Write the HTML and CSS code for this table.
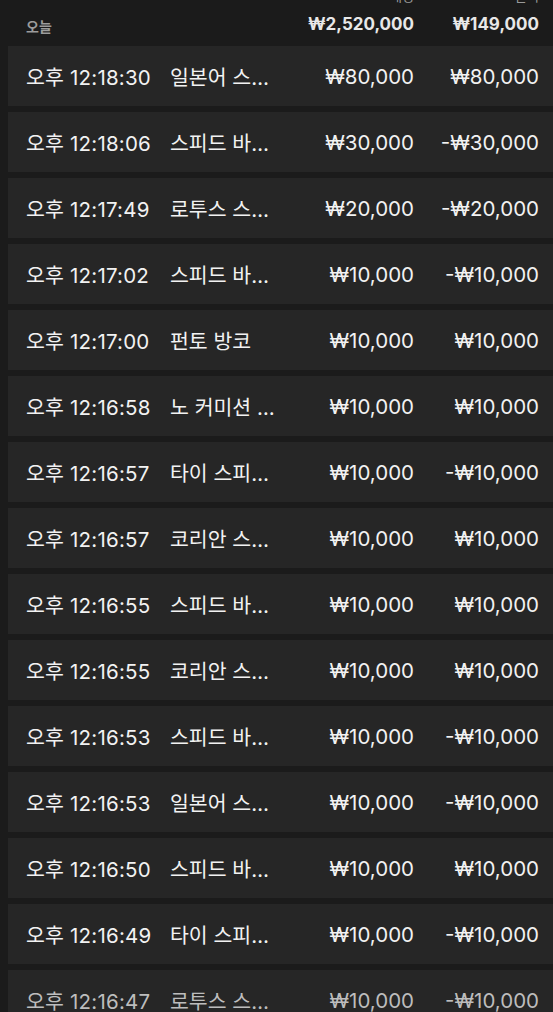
FILE: index.html
```html
<!DOCTYPE html>
<html lang="ko">
<head>
<meta charset="utf-8">
<link rel="stylesheet" href="styles.css">
</head>
<body>
<div class="page">
  <div class="summary">
    <span class="label c3">배팅</span>
    <span class="label c4">손익</span>
    <span class="today">오늘</span>
    <span class="total c3">₩2,520,000</span>
    <span class="total c4">₩149,000</span>
  </div>
  <div class="list">
    <div class="row"><span class="time">오후 12:18:30</span><span class="name">일본어 스…</span><span class="amt">₩80,000</span><span class="net">₩80,000</span></div>
    <div class="row"><span class="time">오후 12:18:06</span><span class="name">스피드 바…</span><span class="amt">₩30,000</span><span class="net">-₩30,000</span></div>
    <div class="row"><span class="time">오후 12:17:49</span><span class="name">로투스 스…</span><span class="amt">₩20,000</span><span class="net">-₩20,000</span></div>
    <div class="row"><span class="time">오후 12:17:02</span><span class="name">스피드 바…</span><span class="amt">₩10,000</span><span class="net">-₩10,000</span></div>
    <div class="row"><span class="time">오후 12:17:00</span><span class="name">펀토 방코</span><span class="amt">₩10,000</span><span class="net">₩10,000</span></div>
    <div class="row"><span class="time">오후 12:16:58</span><span class="name">노 커미션 …</span><span class="amt">₩10,000</span><span class="net">₩10,000</span></div>
    <div class="row"><span class="time">오후 12:16:57</span><span class="name">타이 스피…</span><span class="amt">₩10,000</span><span class="net">-₩10,000</span></div>
    <div class="row"><span class="time">오후 12:16:57</span><span class="name">코리안 스…</span><span class="amt">₩10,000</span><span class="net">₩10,000</span></div>
    <div class="row"><span class="time">오후 12:16:55</span><span class="name">스피드 바…</span><span class="amt">₩10,000</span><span class="net">₩10,000</span></div>
    <div class="row"><span class="time">오후 12:16:55</span><span class="name">코리안 스…</span><span class="amt">₩10,000</span><span class="net">₩10,000</span></div>
    <div class="row"><span class="time">오후 12:16:53</span><span class="name">스피드 바…</span><span class="amt">₩10,000</span><span class="net">-₩10,000</span></div>
    <div class="row"><span class="time">오후 12:16:53</span><span class="name">일본어 스…</span><span class="amt">₩10,000</span><span class="net">-₩10,000</span></div>
    <div class="row"><span class="time">오후 12:16:50</span><span class="name">스피드 바…</span><span class="amt">₩10,000</span><span class="net">₩10,000</span></div>
    <div class="row"><span class="time">오후 12:16:49</span><span class="name">타이 스피…</span><span class="amt">₩10,000</span><span class="net">-₩10,000</span></div>
    <div class="row dim"><span class="time">오후 12:16:47</span><span class="name">로투스 스…</span><span class="amt">₩10,000</span><span class="net">-₩10,000</span></div>
  </div>
</div>
</body>
</html>
```

FILE: styles.css
```css
html, body {
  margin: 0;
  padding: 0;
  background: #1b1b1b;
  overflow: hidden;
}
.page {
  font-family: Inter, "Noto Sans CJK KR", sans-serif;
  color: #f2f2f2;
  padding-left: 8px;
  height: 1012px;
  overflow: hidden;
}
.summary {
  display: grid;
  grid-template-columns: 144px 1fr 110px 125px;
  grid-template-rows: 16px 22px;
  margin-top: -12px;
  padding: 0 14px 0 18px;
  margin-bottom: 11px;
  row-gap: 9px;
}
.label {
  grid-row: 1;
  font-size: 13px;
  line-height: 16px;
  color: #9a9a9a;
  text-align: right;
}
.c3 { grid-column: 3; }
.c4 { grid-column: 4; }
.today {
  grid-row: 2;
  grid-column: 1;
  font-size: 14px;
  font-weight: 700;
  color: #9c9c9c;
  align-self: end;
  line-height: 18px;
  margin-bottom: -1px;
}
.total {
  grid-row: 2;
  font-size: 17px;
  font-weight: 700;
  line-height: 22px;
  text-align: right;
  color: #e8e8e8;
}
.list {
  display: flex;
  flex-direction: column;
  gap: 6px;
}
.row {
  display: grid;
  grid-template-columns: 144px 1fr 110px 125px;
  align-items: center;
  height: 60px;
  padding: 0 14px 0 18px;
  background: #262626;
  font-size: 20.5px;
  white-space: nowrap;
}
.time { letter-spacing: 0.2px; }
.time, .name { overflow: hidden; }
.amt, .net { text-align: right; }
.row.dim { color: #bdbdbd; }
```
